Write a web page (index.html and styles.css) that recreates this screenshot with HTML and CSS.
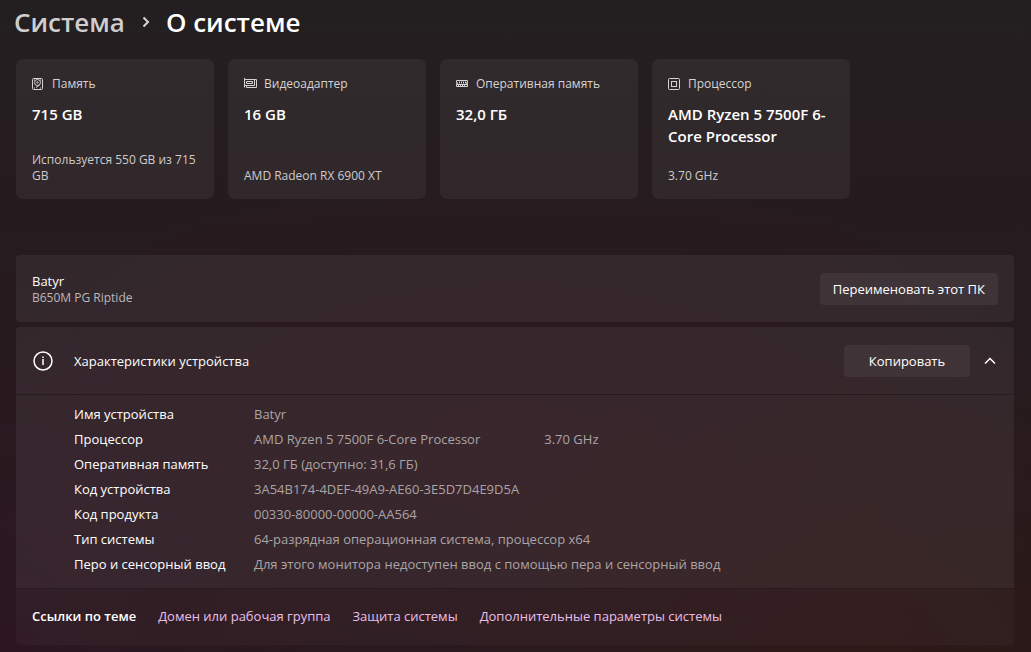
FILE: index.html
```html
<!DOCTYPE html>
<html lang="ru">
<head>
  <meta charset="UTF-8">
  <meta name="viewport" content="width=device-width, initial-scale=1.0">
  <title>О системе</title>
  <link rel="stylesheet" href="styles.css">
</head>
<body>
  <!-- Заголовок -->
  <nav class="breadcrumb">
    <a href="#">Система</a>
    <svg class="crumb-arrow" viewBox="0 0 10 12"><path d="M2.5 1.5 7 6 2.5 10.5"/></svg>
    <h1>О системе</h1>
  </nav>

  <!-- Карточки -->
  <section class="cards">
    <article class="card">
      <div class="card-label">
        <svg viewBox="0 0 14 14"><rect x=".5" y="1.5" width="10" height="11" rx="1"/><circle cx="5.5" cy="5.500" r="3"/><circle cx="5.500" cy="5.500" r=".7"/><path d="M7.500 8 4 10.500M2 3h1M8 3h1M2 11h1M8 11h1"/></svg>
        <span>Память</span>
      </div>
      <h2>715 GB</h2>
      <p>Используется 550 GB из 715 GB</p>
    </article>
    <article class="card">
      <div class="card-label">
        <svg viewBox="0 0 14 14"><path d="M.5 1v9.500M.5 2.500h10v6H.5M2.500 4.500h6v2h-6zM10.500 2.500h2v8h-10v-2"/></svg>
        <span>Видеоадаптер</span>
      </div>
      <h2>16 GB</h2>
      <p>AMD Radeon RX 6900 XT</p>
    </article>
    <article class="card">
      <div class="card-label">
        <svg viewBox="0 0 14 14"><path d="M.5 3.500h11v2h-1v1h1v3H.5v-3h1v-1h-1zM3.500 4.500v2M5.500 4.500v2M7.500 4.500v2M9.500 4.500v2M1 7.500h10M2.500 8v1.500M4.500 8v1.500M6.500 8v1.500M8.500 8v1.500"/></svg>
        <span>Оперативная память</span>
      </div>
      <h2>32,0 ГБ</h2>
    </article>
    <article class="card">
      <div class="card-label">
        <svg viewBox="0 0 14 14"><rect x=".5" y="1.5" width="11" height="11" rx="1"/><rect x="3.5" y="4.5" width="5" height="5"/></svg>
        <span>Процессор</span>
      </div>
      <h2>AMD Ryzen 5 7500F 6-Core Processor</h2>
      <p>3.70 GHz</p>
    </article>
  </section>

  <!-- Имя ПК -->
  <section class="panel row">
    <div class="pc">
      <div class="pc-name">Batyr</div>
      <div class="pc-model">B650M PG Riptide</div>
    </div>
    <button class="btn" type="button">Переименовать этот ПК</button>
  </section>

  <!-- Характеристики -->
  <section class="panel">
    <div class="row specs-head">
      <svg class="info" viewBox="0 0 20 20"><circle cx="10" cy="10" r="9"/><path d="M10 8v6M10 5.500v1.500"/></svg>
      <h3>Характеристики устройства</h3>
      <button class="btn btn-copy" type="button">Копировать</button>
      <button class="toggle" type="button" aria-label="Свернуть" aria-expanded="true">
        <svg viewBox="0 0 12 12"><path d="M1 8.500 6 3.500 11 8.500"/></svg>
      </button>
    </div>
    <dl class="specs">
      <dt>Имя устройства</dt><dd>Batyr</dd>
      <dt>Процессор</dt><dd class="cpu"><span>AMD Ryzen 5 7500F 6-Core Processor</span><span>3.70 GHz</span></dd>
      <dt>Оперативная память</dt><dd>32,0 ГБ (доступно: 31,6 ГБ)</dd>
      <dt>Код устройства</dt><dd>3A54B174-4DEF-49A9-AE60-3E5D7D4E9D5A</dd>
      <dt>Код продукта</dt><dd>00330-80000-00000-AA564</dd>
      <dt>Тип системы</dt><dd>64-разрядная операционная система, процессор x64</dd>
      <dt>Перо и сенсорный ввод</dt><dd>Для этого монитора недоступен ввод с помощью пера и сенсорный ввод</dd>
    </dl>
    <div class="links">
      <strong>Ссылки по теме</strong>
      <a href="#">Домен или рабочая группа</a>
      <a href="#">Защита системы</a>
      <a href="#">Дополнительные параметры системы</a>
    </div>
  </section>
</body>
</html>
```
FILE: styles.css
```css
* {
  margin: 0;
  padding: 0;
  box-sizing: border-box;
}

body {
  min-height: 100vh;
  padding: 5px 17px 6px 16px;
  font-family: "Segoe UI", "Open Sans", "Noto Sans", sans-serif;
  font-size: 13px;
  line-height: 20px;
  color: #fff;
  background:
    radial-gradient(ellipse 55% 45% at 50% 70%, rgba(50, 24, 32, 0.6), transparent),
    radial-gradient(ellipse 35% 60% at 0% 100%, rgba(46, 22, 34, 0.8), transparent),
    radial-gradient(ellipse 45% 50% at 85% 100%, rgba(46, 25, 21, 0.9), transparent),
    linear-gradient(#231f20, #261b1f 35%, #271b1f);
}

svg {
  flex: none;
  fill: none;
  stroke: currentColor;
}

a {
  text-decoration: none;
}

.breadcrumb {
  display: flex;
  align-items: center;
  height: 34px;
  margin-left: -2px;
  font-size: 26px;
  font-weight: 600;
}

.breadcrumb a {
  color: #cfcdcd;
}

.breadcrumb h1 {
  font-size: 26px;
  font-weight: 600;
}

.crumb-arrow {
  width: 10px;
  height: 12px;
  margin: 0 15px 0 16px;
  stroke: #d8d6d6;
  stroke-width: 2;
}

.cards {
  display: grid;
  grid-template-columns: repeat(auto-fill, 198px);
  gap: 14px;
  margin: 20px 0 56px;
}

.card {
  display: flex;
  flex-direction: column;
  min-height: 140px;
  padding: 15px 12px 15px 16px;
  border-radius: 7px;
  background: rgba(255, 255, 255, 0.055);
}

.card-label {
  display: flex;
  align-items: center;
  gap: 6px;
  height: 20px;
  font-size: 12px;
  color: #d6d3d4;
}

.card-label svg {
  width: 14px;
  height: 14px;
}

.card h2 {
  margin-top: 9px;
  font-size: 15px;
  font-weight: 600;
  line-height: 22px;
}

.card p {
  margin-top: auto;
  font-size: 12px;
  line-height: 16px;
  color: #cfcbcc;
}

.panel {
  margin-bottom: 5px;
  border-radius: 4px;
  background: rgba(255, 255, 255, 0.06);
}

.row {
  display: flex;
  align-items: center;
  height: 67px;
  padding: 0 16px;
}

.pc {
  flex: 1;
}

.pc-name {
  line-height: 18px;
}

.pc-model {
  font-size: 12px;
  line-height: 16px;
  color: #bdb7ba;
}

.btn {
  height: 32px;
  padding: 0 13px;
  border: 0;
  border-radius: 4px;
  font: inherit;
  color: #fff;
  background: rgba(255, 255, 255, 0.06);
}

.btn-copy {
  min-width: 126px;
}

.specs-head {
  height: 68px;
  border-bottom: 1px solid #261b20;
}

.info {
  width: 20px;
  height: 20px;
  margin: 0 21px 0 1px;
  stroke-width: 1.5;
}

.specs-head h3 {
  flex: 1;
  font-size: 13px;
  font-weight: 400;
}

.toggle {
  display: flex;
  margin: 0 2px 0 14px;
  border: 0;
  color: #fff;
  background: none;
}

.toggle svg {
  width: 12px;
  height: 12px;
  stroke-width: 1.5;
}

.specs {
  display: grid;
  grid-template-columns: 180px 1fr;
  grid-auto-rows: 25px;
  padding: 7px 16px 11px 58px;
  line-height: 25px;
}

.specs dd {
  color: #aba4a6;
}

.cpu {
  display: flex;
  gap: 64px;
}

.links {
  display: flex;
  align-items: center;
  gap: 22px;
  height: 57px;
  padding: 0 16px 2px;
  border-top: 1px solid #261b20;
  border-radius: 0 0 4px 4px;
  background: rgba(40, 16, 22, 0.35);
}

.links strong {
  font-weight: 600;
}

.links a {
  color: #e9bfea;
}
```
